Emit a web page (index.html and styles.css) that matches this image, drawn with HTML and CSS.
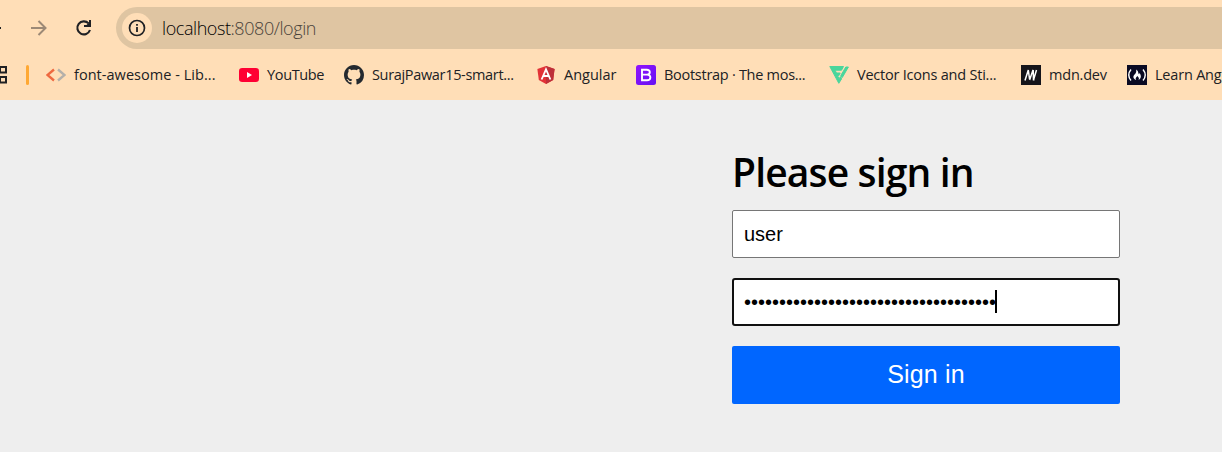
FILE: index.html
```html
<!DOCTYPE html>
<html lang="en">
<head>
<meta charset="utf-8">
<title>Please sign in</title>
<link rel="stylesheet" href="styles.css">
</head>
<body>
<header class="browser">
  <div class="toolbar">
    <svg class="nav" width="116" height="56" viewBox="0 0 116 56" fill="none">
      <path d="M-12 28H1" stroke="#202124" stroke-width="2"/>
      <path d="M31 28H45M38.5 21L45.5 28L38.5 35" stroke="#9c8976" stroke-width="2"/>
      <path d="M88.6 23.4A6.5 6.5 0 1 0 90 30" stroke="#202124" stroke-width="2.1"/>
      <path d="M91 20V27H84V25H86.5L89 22.5V20Z" fill="#202124"/>
    </svg>
    <div class="address">
      <span class="info"><svg width="18" height="18" viewBox="0 0 18 18"><circle cx="9" cy="9" r="7.5" fill="none" stroke="#202124" stroke-width="1.7"/><path d="M8.1 8h1.8v5H8.1zM8.1 5h1.8v1.8H8.1z" fill="#202124"/></svg></span>
      <span class="url">localhost<span class="path">:8080/login</span></span>
    </div>
  </div>
  <nav class="bookmarks">
    <svg class="apps" width="46" height="20" viewBox="0 0 46 20"><path d="M0 1.9H6V7.4H0ZM0 12H6V17.500H0Z" fill="none" stroke="#202124" stroke-width="2"/><rect x="26" y="0" width="3" height="20" rx="1.5" fill="#ffa833"/></svg>
    <a class="mark"><svg width="20" height="20" viewBox="0 0 20 20" fill="none" stroke-width="2.3"><path d="M8 4.5L1.5 10L8 15.5" stroke="#ee6940"/><path d="M12 4.5L18.5 10L12 15.5" stroke="#b4b0aa"/></svg><span class="t1">font-awesome - Lib...</span></a>
    <a class="mark"><svg width="20" height="20" viewBox="0 0 20 20"><rect y="3" width="20" height="14" rx="3.2" fill="#ff0033"/><path d="M8 7L13 10L8 13Z" fill="#fff"/></svg><span class="t2">YouTube</span></a>
    <a class="mark"><svg width="20" height="20" viewBox="0 0 16 16"><path fill="#24292f" d="M8 0C3.58 0 0 3.58 0 8c0 3.54 2.29 6.53 5.47 7.59.4.07.55-.17.55-.38 0-.19-.01-.82-.01-1.49-2.01.37-2.53-.49-2.69-.94-.09-.23-.48-.94-.82-1.13-.28-.15-.68-.52-.01-.53.63-.01 1.08.58 1.23.82.72 1.21 1.87.87 2.33.66.07-.52.28-.87.51-1.07-1.78-.2-3.64-.89-3.64-3.95 0-.87.31-1.59.82-2.15-.08-.2-.36-1.02.08-2.12 0 0 .67-.21 2.2.82.64-.18 1.32-.27 2-.27s1.36.09 2 .27c1.53-1.04 2.2-.82 2.2-.82.44 1.1.16 1.92.08 2.12.51.56.82 1.27.82 2.15 0 3.07-1.87 3.75-3.65 3.95.29.25.54.73.54 1.48 0 1.07-.01 1.93-.01 2.2 0 .21.15.46.55.38A8.01 8.01 0 0 0 16 8c0-4.42-3.58-8-8-8Z"/></svg><span class="t3">SurajPawar15-smart...</span></a>
    <a class="mark"><svg width="20" height="20" viewBox="0 0 20 20"><path d="M10 1L18.6 4L17.2 15L10 19L2.8 15L1.4 4Z" fill="#e23237"/><path d="M10 1L18.6 4L17.2 15L10 19Z" fill="#bd3039"/><path d="M5.6 14.5L10 4.3L14.4 14.5M7.3 11H12.7" fill="none" stroke="#fff" stroke-width="1.8"/></svg><span class="t4">Angular</span></a>
    <a class="mark"><svg width="20" height="20" viewBox="0 0 20 20"><defs><linearGradient id="violet" x1="0" y1="0" x2="1" y2="1"><stop stop-color="#9013fe"/><stop offset="1" stop-color="#6610f2"/></linearGradient></defs><rect width="20" height="20" rx="2.5" fill="url(#violet)"/><path d="M6 4.8H10.8C15 4.8 14.5 9.6 11 9.6H6H11C15.6 9.6 15.3 15.3 11 15.3H6Z" fill="none" stroke="#fff" stroke-width="1.9"/></svg><span class="t5">Bootstrap · The mos...</span></a>
    <a class="mark"><svg width="20" height="20" viewBox="0 0 20 20"><g fill="#49d69c" stroke="#49d69c" stroke-linejoin="round" stroke-width="1"><path d="M.8 1.500H14.500L12.500 5.200H6L7.500 8H11.200L9.500 11H8.500L10 13.500L11.800 11.500L12.500 14L9.800 18.300Z"/><path d="M16.800 2H19.400L13.300 12.500L11.800 10.500Z"/></g></svg><span class="t6">Vector Icons and Sti...</span></a>
    <a class="mark"><svg width="20" height="20" viewBox="0 0 20 20"><rect width="20" height="20" fill="#15141a"/><path d="M4 15.500L7.300 5L8.600 14.500L12.200 5L12.500 14.800H13.500M8.600 15L12 5M12.500 15L15.500 5" fill="none" stroke="#fff" stroke-width="1.5"/></svg><span class="t7">mdn.dev</span></a>
    <a class="mark"><svg width="20" height="20" viewBox="0 0 20 20"><rect width="20" height="20" fill="#0a0a23"/><path d="M4 4.5Q-.5 10 4 15.5M16 4.5Q20.500 10 16 15.500" fill="none" stroke="#fff" stroke-width="1.4"/><path d="M9.200 4.500C12 6.500 10.800 8 12 9.200L12.500 8C14.800 11 14 13.500 11.500 15C12.700 12.500 11.200 12.500 10.500 11C9 12.500 8 13.300 9.200 15C5.700 13.500 5.800 11.200 7.800 9.200C9.300 7.800 9.400 6.500 9.200 4.500Z" fill="#fff"/></svg><span class="t8">Learn Ang</span></a>
  </nav>
</header>
<main class="page">
  <form class="signin">
    <h1 class="title">Please sign in</h1>
    <div class="field">user</div>
    <div class="field focused"><span class="dots">••••••••••••••••••••••••••••••••••••</span><span class="caret"></span></div>
    <button class="submit" type="button">Sign in</button>
  </form>
</main>
</body>
</html>
```
FILE: styles.css
```css
* { box-sizing: border-box; }
body { margin: 0; width: 1222px; height: 452px; overflow: hidden; background: #eee; font-family: "Open Sans", sans-serif; }
.browser { height: 100px; background: #ffdeb7; overflow: hidden; }
.toolbar { display: flex; height: 56px; }
.nav { flex: none; }
.address { flex: 1; display: flex; align-items: center; gap: 10px; height: 42px; margin-top: 7px; padding-left: 6px; background: #dfc5a2; border-radius: 21px 0 0 21px; }
.info { display: flex; align-items: center; justify-content: center; width: 30px; height: 30px; border-radius: 50%; background: #ffdeb7; }
.url { font-size: 18px; line-height: 24px; font-weight: 300; color: #000; white-space: nowrap; letter-spacing: -0.43px; }
.path { color: #4a433a; }
.bookmarks { display: grid; grid-template-columns: 46px 193px 105px 192px 100px 193px 192px 106px 95px; padding-top: 9px; align-items: center; }
.mark { display: flex; align-items: center; gap: 8px; height: 20px; font-size: 14.5px; line-height: 20px; font-weight: 400; color: #202124; white-space: nowrap; }
.mark svg { flex: none; }
.t1 { letter-spacing: 0.04px; }
.t2 { letter-spacing: -0.35px; }
.t3 { letter-spacing: -0.33px; }
.t5 { letter-spacing: -0.28px; }
.t6 { letter-spacing: -0.22px; }
.t7 { letter-spacing: -0.2px; }
.t8 { letter-spacing: -0.2px; }
.page { height: 352px; background: #eee; }
.signin { width: 388px; margin-left: 732px; padding-top: 45px; }
.title { margin: 0 0 11px; height: 54px; font-size: 39px; line-height: 54px; font-weight: 600; color: #000; white-space: nowrap; letter-spacing: -0.85px; }
.field { display: flex; align-items: center; height: 48px; margin-bottom: 20px; padding: 0 11px; background: #fff; border: 1px solid #767676; border-radius: 2px; font: 20px "Liberation Sans", sans-serif; color: #000; }
.focused { border: 2px solid #101010; border-radius: 3px; padding: 0 10px; }
.caret { width: 2px; height: 23px; margin: 0 0 2px -1px; background: #000; }
.submit { display: block; width: 100%; height: 58px; padding: 0 0 1px; border: 0; border-radius: 2px; background: #06f; color: #fff; font: 25px "Liberation Sans", sans-serif; letter-spacing: 0.15px; }
```
